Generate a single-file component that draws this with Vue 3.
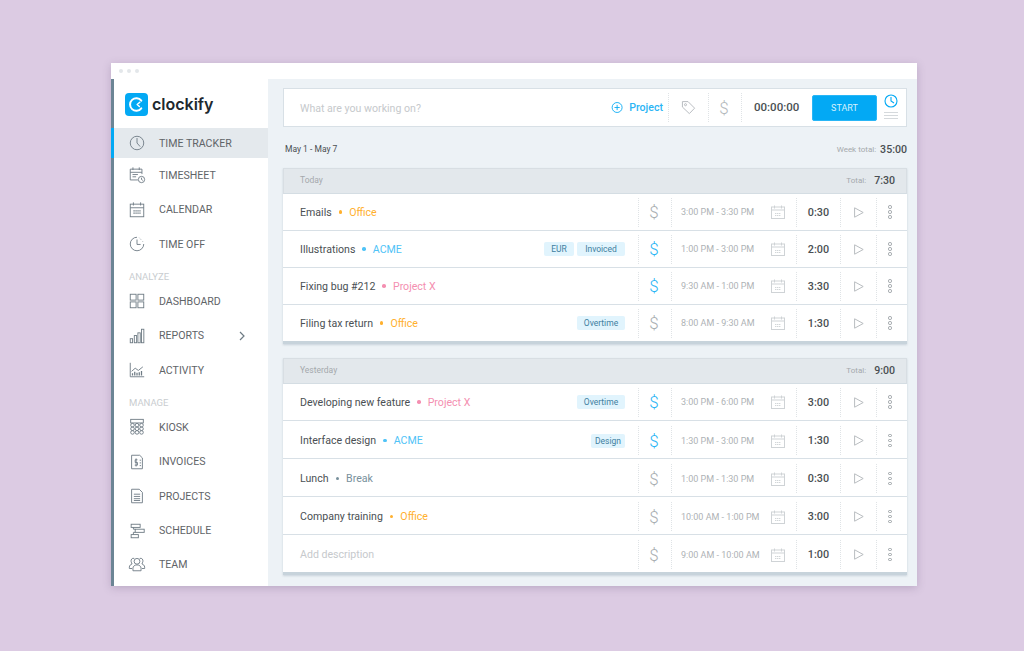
<template>
  <div class="page">
    <div class="window">
      <div class="title-bar">
        <span class="win-dot"></span>
        <span class="win-dot"></span>
        <span class="win-dot"></span>
      </div>
      <div class="app-body">
        <aside class="sidebar">
          <div class="logo">
            <svg class="logo-mark" viewBox="0 0 23 23">
              <rect width="23" height="23" rx="4" fill="#03a9f4" />
              <path d="M16.300 7.600a6.300 6.300 0 1 0 0 7.800" fill="none" stroke="#fff" stroke-width="2" stroke-linecap="round" />
              <path d="M14.800 9.200l-2.600 2.300 2.200 2" fill="none" stroke="#fff" stroke-width="1.500" stroke-linecap="round" stroke-linejoin="round" />
            </svg>
            <span class="logo-text">clockify</span>
          </div>
          <template v-for="item in nav" :key="item.label">
            <div v-if="item.section" class="nav-section">{{ item.label }}</div>
            <div v-else class="nav-item" :class="{ active: item.active }">
              <svg class="nav-icon" viewBox="0 0 20 20" v-html="icons[item.icon]"></svg>
              <span>{{ item.label }}</span>
              <svg v-if="item.arrow" class="nav-arrow" viewBox="0 0 8 12">
                <path d="M2 2l4 4-4 4" fill="none" stroke="#6e7b84" stroke-width="1.200" />
              </svg>
            </div>
          </template>
        </aside>

        <main class="content">
          <div class="tracker">
            <div class="tracker-input">What are you working on?</div>
            <div class="tracker-project">
              <svg viewBox="0 0 14 14" class="plus-icon">
                <circle cx="7" cy="7" r="5.700" fill="none" stroke="#03a9f4" />
                <path d="M7 4v6M4 7h6" stroke="#03a9f4" />
              </svg>
              Project
            </div>
            <div class="tracker-cell tag-cell">
              <svg viewBox="0 0 16 16" class="tag-icon">
                <path d="M1.500 1.700h6l7 7-5.600 5.800-7.400-7z" fill="none" stroke="#b4b9bd" />
                <circle cx="4.800" cy="5" r="1.100" fill="none" stroke="#b4b9bd" />
              </svg>
            </div>
            <div class="tracker-cell dollar-cell">$</div>
            <div class="tracker-time">00:00:00</div>
            <button class="start-btn">START</button>
            <div class="mode-icons">
              <svg viewBox="0 0 14 14" class="mode-clock">
                <circle cx="7" cy="7" r="6" fill="none" stroke="#03a9f4" stroke-width="1.100" />
                <path d="M7 3v4l3 2" fill="none" stroke="#03a9f4" stroke-width="1.100" />
              </svg>
              <div class="mode-list"></div>
            </div>
          </div>

          <div class="week-row">
            <span class="week-range">May 1 - May 7</span>
            <span class="week-label">Week total:</span>
            <span class="week-total">35:00</span>
          </div>

          <section v-for="group in groups" :key="group.title" class="group">
            <div class="group-head">
              <span class="group-title">{{ group.title }}</span>
              <span class="group-label">Total:</span>
              <span class="group-total">{{ group.total }}</span>
            </div>
            <div v-for="entry in group.entries" :key="entry.desc" class="entry">
              <div class="entry-main">
                <span class="entry-desc" :class="{ empty: entry.empty }">{{ entry.desc }}</span>
                <template v-if="entry.project">
                  <span class="entry-dot" :style="{ background: colors[entry.project] }"></span>
                  <span class="entry-project" :style="{ color: colors[entry.project] }">{{ entry.project }}</span>
                </template>
                <span class="entry-tags">
                  <span v-for="tag in entry.tags" :key="tag" class="tag" :style="{ width: tagWidths[tag] + 'px' }">{{ tag }}</span>
                </span>
              </div>
              <div class="cell cell-bill" :class="{ billed: entry.billed }">$</div>
              <div class="cell cell-range">
                <span class="range-text">{{ entry.range }}</span>
                <svg viewBox="0 0 14 14" class="cal-icon">
                  <rect x="0.500" y="2" width="13" height="11.500" fill="none" stroke="#cfd3d6" />
                  <path d="M0.500 5h13M3.500 0.500v3M10.500 0.500v3" fill="none" stroke="#cfd3d6" />
                  <path d="M4 8.500h6M4 10.500h6" stroke="#d2d6d8" stroke-width="1.200" stroke-dasharray="1.400 .6" />
                </svg>
              </div>
              <div class="cell cell-duration">{{ entry.duration }}</div>
              <div class="cell cell-play">
                <svg viewBox="0 0 10 11" class="play-icon">
                  <path d="M0.600 0.800l8.600 4.700-8.600 4.700z" fill="none" stroke="#b9bdc0" />
                </svg>
              </div>
              <div class="cell cell-menu">
                <span class="menu-dot"></span>
                <span class="menu-dot"></span>
                <span class="menu-dot"></span>
              </div>
            </div>
          </section>
        </main>
      </div>
    </div>
  </div>
</template>

<script setup>
const colors = {
  Office: '#ffb02e',
  ACME: '#4fc3f7',
  'Project X': '#f48fb1',
  Break: '#78909c'
}

const tagWidths = { EUR: 30, Invoiced: 48, Overtime: 48, Design: 34 }

const nav = [
  { label: 'TIME TRACKER', icon: 'clock', active: true },
  { label: 'TIMESHEET', icon: 'sheet' },
  { label: 'CALENDAR', icon: 'calendar' },
  { label: 'TIME OFF', icon: 'off' },
  { label: 'ANALYZE', section: true },
  { label: 'DASHBOARD', icon: 'dash' },
  { label: 'REPORTS', icon: 'reports', arrow: true },
  { label: 'ACTIVITY', icon: 'activity' },
  { label: 'MANAGE', section: true },
  { label: 'KIOSK', icon: 'kiosk' },
  { label: 'INVOICES', icon: 'invoice' },
  { label: 'PROJECTS', icon: 'project' },
  { label: 'SCHEDULE', icon: 'schedule' },
  { label: 'TEAM', icon: 'team' }
]

const s = 'fill="none" stroke="#6e7b84" stroke-width="1"'
const icons = {
  clock: `<circle cx="10" cy="10" r="7.500" ${s}/><path d="M10 4.500V10l3.500 4" ${s}/>`,
  sheet: `<path d="M11 15.500H2.500v-12h13V9M2.500 7h13M5.500 1.500v3M12.500 1.500v3M5 9.500h6M5 12h4" ${s}/><circle cx="15" cy="15" r="3.500" ${s}/><path d="M15 13v2l1.500 1" ${s}/>`,
  calendar: `<rect x="2.500" y="3.500" width="15" height="14" ${s}/><path d="M2.500 7.500h15M6 1.500v3.500M14 1.500v3.500" ${s}/><path d="M6 11h8M6 13.500h8" stroke="#6e7b84" stroke-width="1.300" stroke-dasharray="1.500 .7"/>`,
  off: `<path d="M10 2.500a7.500 7.500 0 1 0 7.500 7.500" ${s}/><path d="M10 5v5.500h4" ${s}/><path d="M12.500 3l5 5.500" stroke="#9aa5ac" stroke-width="1" stroke-dasharray="1 1.500" fill="none"/>`,
  dash: `<rect x="2.500" y="2.500" width="6.500" height="6.500" ${s}/><rect x="11" y="2.500" width="6.500" height="6.500" ${s}/><rect x="2.500" y="11" width="6.500" height="6.500" ${s}/><rect x="11" y="11" width="6.500" height="6.500" ${s}/>`,
  reports: `<rect x="2.500" y="13" width="2.600" height="4.500" ${s}/><rect x="7" y="9.500" width="2.600" height="8" ${s}/><rect x="11" y="6.500" width="2.600" height="11" ${s}/><rect x="15" y="2.500" width="2.600" height="15" ${s}/>`,
  activity: `<path d="M2.500 2v15.500h15.500" ${s}/><path d="M4 11.500l4-3.500 3.500 2.500 5-4" ${s}/><path d="M5 16v-2.500M7.500 16v-4M10 16v-3M12.500 16v-3.500M15 16v-5" stroke="#6e7b84" stroke-width="1.400" fill="none"/>`,
  kiosk: `<rect x="3" y="1.500" width="14" height="4" ${s}/><circle cx="5" cy="8" r="2" ${s}/><circle cx="10" cy="8" r="2" ${s}/><circle cx="15" cy="8" r="2" ${s}/><circle cx="5" cy="12" r="2" ${s}/><circle cx="10" cy="12" r="2" ${s}/><circle cx="15" cy="12" r="2" ${s}/><circle cx="5" cy="16" r="2" ${s}/><circle cx="10" cy="16" r="2" ${s}/><circle cx="15" cy="16" r="2" ${s}/>`,
  invoice: `<path d="M4 2.500h9l3 3v12H4z" ${s}/><path d="M13 8h1.500M13 11h1.500M13 14h1.500" ${s}/><path d="M10.500 7.500H8v3h2.500v3H7.500M9 6v9" ${s}/>`,
  project: `<path d="M4 2.500h8.500L16 6v11.500H4z" ${s}/><path d="M6.500 8h7M6.500 10.500h7M6.500 13h7M6.500 15h7" ${s}/>`,
  schedule: `<rect x="3.500" y="2.500" width="10" height="3.500" ${s}/><rect x="8" y="8" width="10" height="3.500" ${s}/><rect x="3.500" y="14" width="8" height="3.500" ${s}/><path d="M6 6v2h2M6 14v-2.500h2" ${s}/>`,
  team: `<circle cx="10" cy="7" r="3.200" ${s}/><path d="M5.500 17.500v-3c0-2 2-3.500 4.500-3.500s4.500 1.500 4.500 3.500v3z" ${s}/><path d="M7 3.800C4.500 3 3 5 3.500 7.500c.2 1 .8 1.500 1 2.500-1.500.6-3 1.500-3 3.500v1.500h3M13 3.800c2.500-.8 4 1.200 3.500 3.700-.2 1-.8 1.500-1 2.500 1.500.6 3 1.500 3 3.500v1.500h-3" ${s}/>`
}

const groups = [
  {
    title: 'Today',
    total: '7:30',
    entries: [
      { desc: 'Emails', project: 'Office', range: '3:00 PM - 3:30 PM', duration: '0:30' },
      { desc: 'Illustrations', project: 'ACME', tags: ['EUR', 'Invoiced'], billed: true, range: '1:00 PM - 3:00 PM', duration: '2:00' },
      { desc: 'Fixing bug #212', project: 'Project X', billed: true, range: '9:30 AM - 1:00 PM', duration: '3:30' },
      { desc: 'Filing tax return', project: 'Office', tags: ['Overtime'], range: '8:00 AM - 9:30 AM', duration: '1:30' }
    ]
  },
  {
    title: 'Yesterday',
    total: '9:00',
    entries: [
      { desc: 'Developing new feature', project: 'Project X', tags: ['Overtime'], billed: true, range: '3:00 PM - 6:00 PM', duration: '3:00' },
      { desc: 'Interface design', project: 'ACME', tags: ['Design'], billed: true, range: '1:30 PM - 3:00 PM', duration: '1:30' },
      { desc: 'Lunch', project: 'Break', range: '1:00 PM - 1:30 PM', duration: '0:30' },
      { desc: 'Company training', project: 'Office', range: '10:00 AM - 1:00 PM', duration: '3:00' },
      { desc: 'Add description', empty: true, range: '9:00 AM - 10:00 AM', duration: '1:00' }
    ]
  }
]
</script>

<style>
body {
  background: #dccbe3;
}
</style>

<style scoped>
.page {
  padding: 63px 107px 65px 111px;
  font-family: Roboto, "Liberation Sans", sans-serif;
  color: #4a4f53;
}

.window {
  height: 523px;
  background: #fff;
  display: flex;
  flex-direction: column;
  box-shadow: 0 2px 8px rgba(90, 70, 110, 0.25);
}

.title-bar {
  height: 16px;
  flex-shrink: 0;
  display: flex;
  align-items: center;
  gap: 4px;
  padding-left: 8px;
}

.win-dot {
  width: 4px;
  height: 4px;
  border-radius: 50%;
  background: #e3e7ea;
}

.app-body {
  flex: 1;
  display: flex;
  min-height: 0;
}

.sidebar {
  width: 157px;
  flex-shrink: 0;
  box-sizing: border-box;
  border-left: 3px solid #6c8595;
  position: relative;
}

.logo {
  height: 49px;
  display: flex;
  align-items: flex-start;
  padding: 14px 0 0 11px;
  box-sizing: border-box;
  gap: 4px;
}

.logo-mark {
  width: 23px;
  height: 23px;
}

.logo-text {
  font-family: Inter, sans-serif;
  font-weight: 600;
  font-size: 16px;
  line-height: 23px;
  color: #20282e;
}

.nav-item {
  height: 34.500px;
  display: flex;
  align-items: center;
  font-size: 10.600px;
  color: #5f6468;
  padding-left: 14px;
  position: relative;
}

.nav-item:last-child {
  margin-top: -1px;
}

.nav-item.active {
  height: 30px;
  background: #e4e9ed;
}

.nav-item.active::before {
  content: "";
  position: absolute;
  left: -3px;
  top: 0;
  bottom: 0;
  width: 3px;
  background: #03a9f4;
}

.nav-icon {
  width: 18px;
  height: 18px;
  margin-right: 13px;
  flex-shrink: 0;
}

.nav-arrow {
  width: 8px;
  height: 12px;
  margin-left: 34px;
}

.nav-section {
  height: 22.500px;
  box-sizing: border-box;
  display: flex;
  align-items: flex-end;
  padding: 0 0 2px 15px;
  font-size: 9.500px;
  color: #c9cdd0;
}

.content {
  flex: 1;
  background: #edf2f6;
  padding: 9px 10px 0 15px;
  min-width: 0;
}

.tracker {
  height: 39px;
  box-sizing: border-box;
  background: #fff;
  border: 1px solid #d8e0e6;
  display: flex;
  align-items: center;
}

.tracker-input {
  flex: 1;
  padding: 2px 0 0 16px;
  font-size: 10.600px;
  color: #c6c9cc;
}

.tracker-project {
  display: flex;
  align-items: center;
  gap: 6px;
  width: 52px;
  font-size: 10.600px;
  font-weight: 500;
  color: #2bb5f5;
  margin-right: 5px;
}

.plus-icon {
  width: 13px;
  height: 13px;
}

.tracker-cell {
  height: 29px;
  border-left: 1px dotted #dfe3e6;
  display: flex;
  align-items: center;
  justify-content: center;
  color: #b4b9bd;
}

.tag-cell {
  width: 39px;
}

.tag-icon {
  width: 15px;
  height: 15px;
}

.dollar-cell {
  width: 33px;
  font-size: 17px;
  font-weight: 300;
  padding-right: 2px;
  box-sizing: border-box;
}

.tracker-time {
  border-left: 1px dotted #dfe3e6;
  height: 29px;
  line-height: 29px;
  width: 71px;
  padding-left: 12px;
  box-sizing: border-box;
  font-size: 11.500px;
  font-weight: 500;
  color: #4a4f53;
}

.start-btn {
  width: 65px;
  height: 26px;
  border: 1px solid #29b6f6;
  border-radius: 2px;
  background: #03a9f4;
  color: #d7f1fd;
  font-family: inherit;
  font-size: 9px;
  padding: 0;
  margin-right: 2px;
}

.mode-icons {
  width: 27px;
  box-sizing: border-box;
  padding-right: 4px;
  display: flex;
  flex-direction: column;
  align-items: center;
  gap: 4px;
}

.mode-clock {
  width: 14px;
  height: 14px;
}

.mode-list {
  width: 14px;
  height: 9px;
  background: repeating-linear-gradient(#d5d9dc 0 1px, transparent 1px 3px);
}

.week-row {
  height: 41px;
  box-sizing: border-box;
  padding: 3px 0 0 2px;
  display: flex;
  align-items: center;
}

.week-range {
  flex: 1;
  font-size: 8.500px;
  color: #4a4f53;
}

.week-label {
  font-size: 8px;
  color: #a5a9ac;
  margin-right: 4px;
}

.week-total {
  font-size: 10.600px;
  font-weight: 500;
}

.group {
  margin-bottom: 14px;
  border-bottom: 3px solid #c7d3db;
  box-shadow: 0 1px 2px rgba(120, 140, 155, 0.3);
}

.group-head {
  height: 26px;
  box-sizing: border-box;
  background: #e3e8ec;
  border: 1px solid #d8dee3;
  border-bottom-color: #d4dde3;
  display: flex;
  align-items: center;
  padding: 0 11px 2px 16px;
}

.group-title {
  flex: 1;
  font-size: 8.500px;
  color: #a5a9ac;
}

.group-label {
  font-size: 8px;
  color: #a5a9ac;
  margin-right: 8px;
}

.group-total {
  font-size: 10.600px;
  font-weight: 500;
}

.entry {
  height: 37px;
  box-sizing: border-box;
  background: #fff;
  border-bottom: 1px solid #d8e0e6;
  display: flex;
  align-items: center;
}

.entry:last-child {
  height: 36px;
  border-bottom: none;
}

.group:last-child .entry {
  height: 38px;
  padding-top: 2px;
}

.group:last-child .entry:nth-child(2) {
  height: 37px;
  padding-top: 0;
}

.group:last-child .entry:last-child {
  height: 37px;
}

.entry-main {
  flex: 1;
  min-width: 0;
  display: flex;
  align-items: center;
  padding-left: 17px;
  font-size: 10.600px;
}

.entry-desc {
  color: #4a4f53;
}

.entry-desc.empty {
  color: #c6c9cc;
}

.entry-dot {
  width: 3.500px;
  height: 3.500px;
  border-radius: 50%;
  margin: 0 7px 0 7px;
}

.entry-tags {
  margin-left: auto;
  display: flex;
  gap: 3px;
  margin-right: 13px;
}

.tag {
  height: 14px;
  line-height: 14px;
  text-align: center;
  border-radius: 2px;
  background: #e1f4fd;
  color: #40809f;
  font-size: 8.500px;
}

.cell {
  height: 29px;
  box-sizing: border-box;
  border-left: 1px dotted #dfe3e6;
  display: flex;
  align-items: center;
  justify-content: center;
  flex-shrink: 0;
}

.cell-bill {
  width: 33px;
  padding-right: 2px;
  font-size: 17px;
  font-weight: 300;
  color: #a9aeb2;
}

.cell-bill.billed {
  color: #2bb5f5;
}

.cell-range {
  width: 125px;
  justify-content: flex-start;
  padding-left: 9px;
}

.range-text {
  width: 90px;
  font-size: 9px;
  color: #aeb2b5;
  white-space: nowrap;
}

.cal-icon {
  width: 14px;
  height: 14px;
}

.cell-duration {
  width: 44px;
  font-size: 10.800px;
  font-weight: 500;
}

.cell-play {
  width: 36px;
}

.play-icon {
  width: 10px;
  height: 11px;
}

.cell-menu {
  width: 31px;
  padding-right: 4px;
  flex-direction: column;
  gap: 1.500px;
}

.menu-dot {
  width: 3.500px;
  height: 3.500px;
  box-sizing: border-box;
  border: 1px solid #9aa0a4;
  border-radius: 50%;
}
</style>
